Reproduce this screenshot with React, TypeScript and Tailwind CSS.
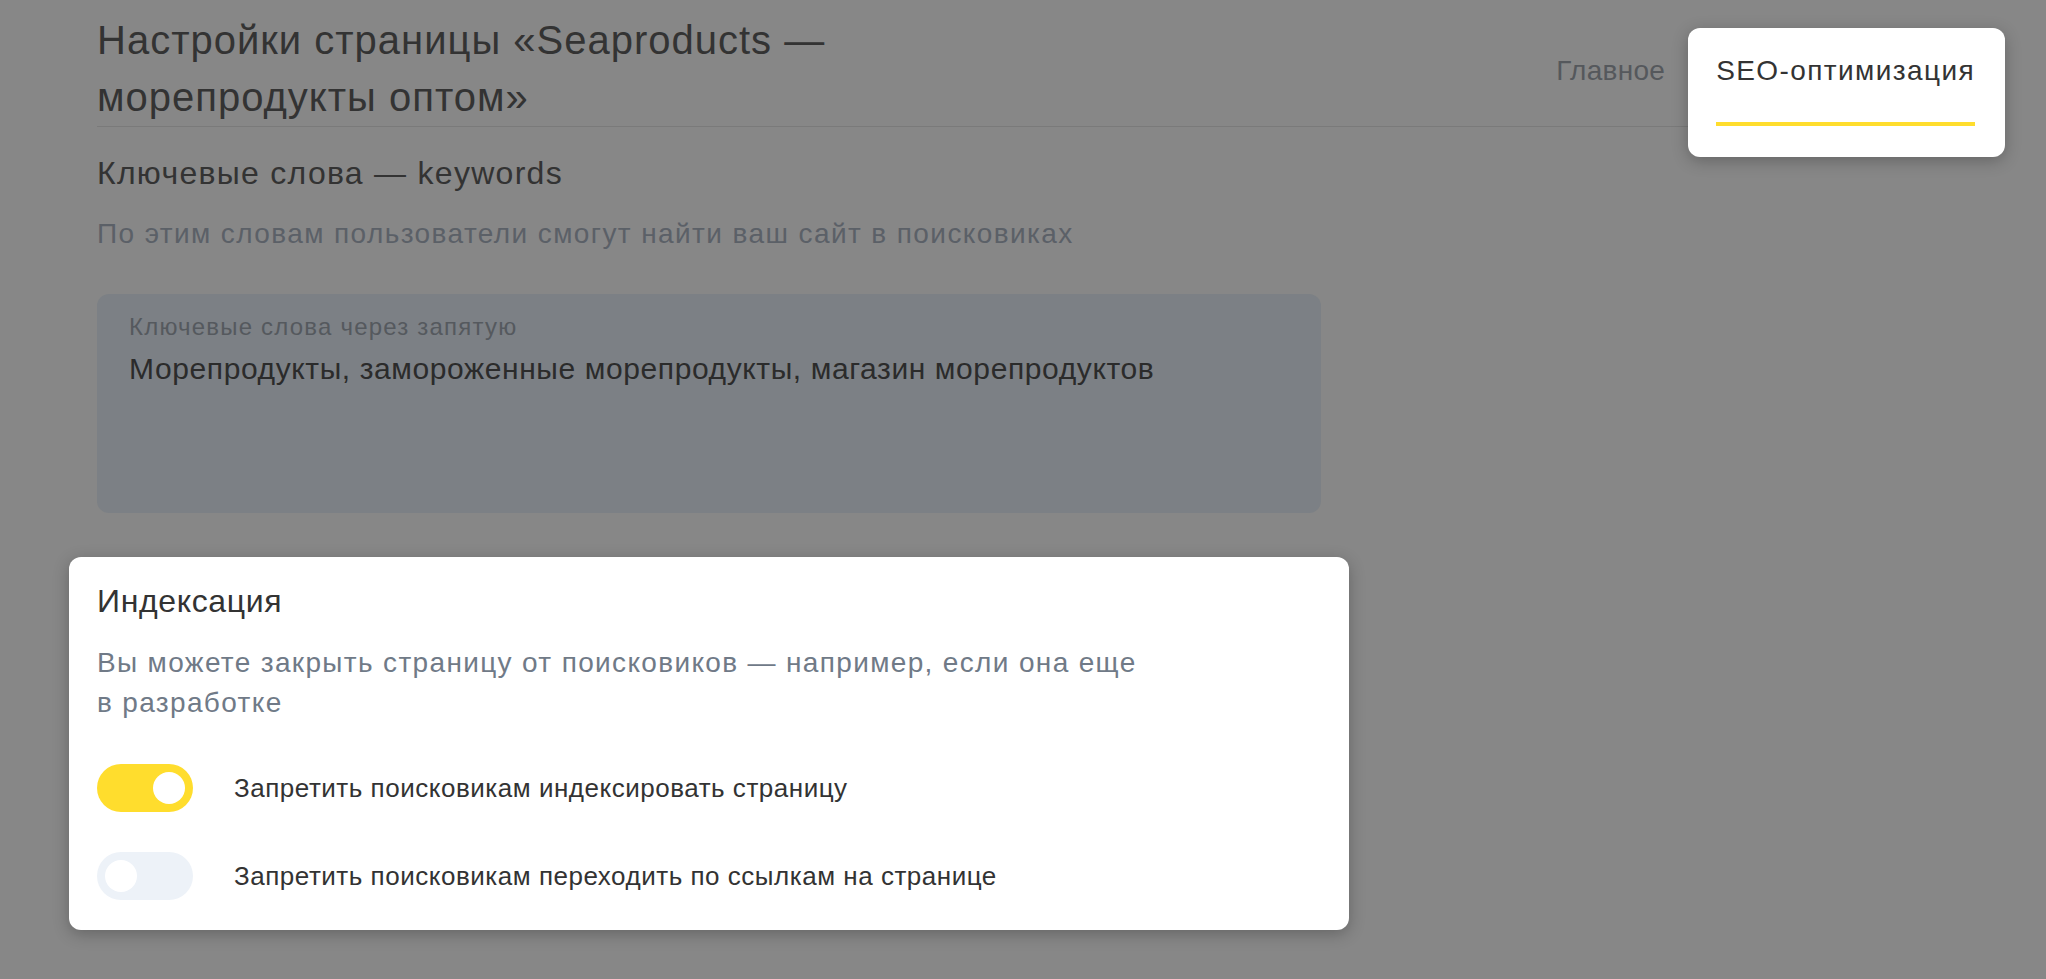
import React, { useState } from "react";

function Toggle({ on, onChange }: { on: boolean; onChange: () => void }) {
  return (
    <button
      type="button"
      onClick={onChange}
      className={`flex h-[48px] w-[96px] shrink-0 items-center rounded-full px-[8px] ${
        on ? "justify-end bg-[#ffdd2d]" : "justify-start bg-[#edf2f8]"
      }`}
    >
      <span className="h-[32px] w-[32px] rounded-full bg-white" />
    </button>
  );
}

export default function App() {
  const [noIndex, setNoIndex] = useState(true);
  const [noFollow, setNoFollow] = useState(false);
  const [keywords, setKeywords] = useState(
    "Морепродукты, замороженные морепродукты, магазин морепродуктов"
  );

  return (
    <div className="min-h-screen bg-[#878787] pl-[97px] pr-[71px] font-['Liberation_Sans',Arial,sans-serif]">
      {/* Header */}
      <div className="flex items-end justify-between border-b border-[#7a7a7a] pt-[12px]">
        <h1 className="max-w-[780px] text-[40px] leading-[57px] font-normal tracking-[0.025em] text-[#333333]">
          Настройки страницы «Seaproducts — морепродукты оптом»
        </h1>
        <div className="flex items-end gap-[51px]">
          <div className="pb-[37px] text-[28px] leading-[36px] tracking-[0.01em] text-[#55585c]">Главное</div>
          {/* highlighted tab */}
          <div className="relative z-10 -mt-[25px] -mr-[30px] -mb-[31px] -ml-[28px] rounded-xl bg-white pt-[25px] pr-[30px] pb-[31px] pl-[28px] shadow-[0_4px_16px_rgba(0,0,0,0.25)]">
            <div className="text-[28px] leading-[36px] tracking-[0.05em] text-[#333333]">SEO-оптимизация</div>
            <div className="mt-[33px] h-[4px] bg-[#ffdd2d]" />
          </div>
        </div>
      </div>

      <div className="w-[1224px]">
        {/* Keywords */}
        <h2 className="mt-[26px] text-[32px] leading-[40px] font-normal tracking-[0.04em] text-[#333333]">
          Ключевые слова — keywords
        </h2>
        <p className="mt-[23px] text-[28px] leading-[36px] tracking-[0.05em] text-[#5b6067]">
          По этим словам пользователи смогут найти ваш сайт в поисковиках
        </p>
        <label className="mt-[42px] flex h-[219px] flex-col rounded-xl bg-[#7c8085] px-[32px] pt-[17px]">
          <span className="text-[24px] leading-[32px] tracking-[0.05em] text-[#55595e]">
            Ключевые слова через запятую
          </span>
          <textarea
            value={keywords}
            onChange={(e) => setKeywords(e.target.value)}
            className="mt-[8px] flex-1 resize-none bg-transparent text-[30px] leading-[36px] tracking-[0.02em] text-[#2b2b2b] outline-none"
          />
        </label>

        {/* Indexing (highlighted) */}
        <section className="relative z-10 -mx-[28px] mt-[44px] rounded-xl bg-white px-[28px] pt-[24px] pb-[30px] shadow-[0_4px_16px_rgba(0,0,0,0.25)]">
          <h2 className="text-[32px] leading-[40px] font-normal tracking-[0.02em] text-[#333333]">Индексация</h2>
          <p className="mt-[22px] max-w-[1060px] text-[28px] leading-[40px] tracking-[0.048em] text-[#707a87]">
            Вы можете закрыть страницу от поисковиков — например, если она еще в разработке
          </p>
          <div className="mt-[41px] flex flex-col gap-[40px]">
            <div className="flex items-center gap-[41px]">
              <Toggle on={noIndex} onChange={() => setNoIndex(!noIndex)} />
              <span className="text-[26px] leading-[32px] tracking-[0.02em] text-[#333333]">
                Запретить поисковикам индексировать страницу
              </span>
            </div>
            <div className="flex items-center gap-[41px]">
              <Toggle on={noFollow} onChange={() => setNoFollow(!noFollow)} />
              <span className="text-[26px] leading-[32px] tracking-[0.02em] text-[#333333]">
                Запретить поисковикам переходить по ссылкам на странице
              </span>
            </div>
          </div>
        </section>
      </div>
    </div>
  );
}
